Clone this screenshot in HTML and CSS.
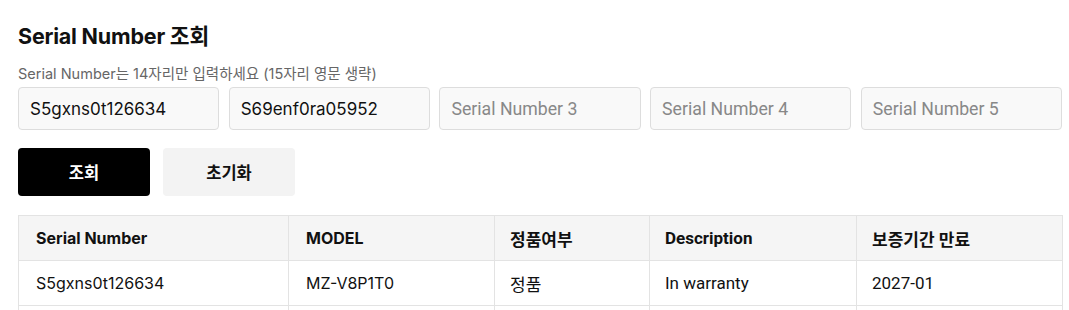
FILE: index.html
```html
<!DOCTYPE html>
<html lang="ko">
<head>
  <meta charset="UTF-8">
  <title>Serial Number 조회</title>
  <link rel="stylesheet" href="styles.css">
</head>
<body>
  <div class="page">
    <h1 class="title">Serial Number 조회</h1>
    <p class="hint">Serial Number는 14자리만 입력하세요 (15자리 영문 생략)</p>
    <div class="inputs">
      <input type="text" value="S5gxns0t126634" placeholder="Serial Number 1">
      <input type="text" value="S69enf0ra05952" placeholder="Serial Number 2">
      <input type="text" placeholder="Serial Number 3">
      <input type="text" placeholder="Serial Number 4">
      <input type="text" placeholder="Serial Number 5">
    </div>
    <div class="actions">
      <button class="btn btn-primary">조회</button>
      <button class="btn btn-secondary">초기화</button>
    </div>
    <table class="result">
      <thead>
        <tr>
          <th class="col-serial">Serial Number</th>
          <th class="col-model">MODEL</th>
          <th class="col-genuine alt">정품여부</th>
          <th class="col-desc alt">Description</th>
          <th class="col-date alt">보증기간 만료</th>
        </tr>
      </thead>
      <tbody>
        <tr>
          <td>S5gxns0t126634</td>
          <td>MZ-V8P1T0</td>
          <td class="alt">정품</td>
          <td class="alt">In warranty</td>
          <td class="alt">2027-01</td>
        </tr>
        <tr>
          <td>S69enf0ra05952</td>
          <td>MZ-V8P1T0</td>
          <td class="alt">정품</td>
          <td class="alt">In warranty</td>
          <td class="alt">2027-01</td>
        </tr>
      </tbody>
    </table>
  </div>
</body>
</html>
```

FILE: styles.css
```css
* {
  box-sizing: border-box;
}
body {
  margin: 0;
  background: #fff;
  color: #111;
  font-family: Inter, "Noto Sans CJK KR", sans-serif;
}
.page {
  padding: 20px 7px 0 18px;
}
.title {
  margin: 0;
  font-size: 21.5px;
  font-weight: 700;
  line-height: 32px;
  letter-spacing: -0.2px;
}
.hint {
  margin: 14px 0 5px;
  font-size: 14.5px;
  line-height: 16px;
  color: #666;
}
.inputs {
  display: grid;
  grid-template-columns: repeat(5, 1fr);
  gap: 9.5px;
}
.inputs input {
  height: 43px;
  padding: 0 11px;
  border: 1px solid #ddd;
  border-radius: 4px;
  background: #f9f9f9;
  font-family: Inter, "Noto Sans CJK KR", sans-serif;
  font-size: 17px;
  color: #111;
  outline: none;
  min-width: 0;
}
.inputs input::placeholder {
  font-family: Roboto, sans-serif;
  color: #888;
  font-size: 17.7px;
}
.actions {
  display: flex;
  gap: 13px;
  margin-top: 18px;
}
.btn {
  width: 132px;
  height: 48px;
  border: none;
  border-radius: 4px;
  font-family: Inter, "Noto Sans CJK KR", sans-serif;
  font-size: 16.5px;
  font-weight: 700;
  cursor: pointer;
}
.btn-primary {
  background: #000;
  color: #fff;
}
.btn-secondary {
  background: #f3f3f3;
  color: #111;
}
.result {
  margin-top: 19px;
  width: 1044px;
  border-collapse: collapse;
  table-layout: fixed;
  font-size: 16px;
}
.result th,
.result td {
  height: 45px;
  padding: 0 17px;
  border: 1px solid #e3e3e3;
  text-align: left;
  vertical-align: middle;
}
.result th {
  background: #f5f5f5;
  font-weight: 700;
}
.result .alt {
  padding-left: 15px;
  font-family: Roboto, "Noto Sans CJK KR", sans-serif;
  font-size: 17px;
}
.col-serial { width: 270px; }
.col-model { width: 206px; }
.col-genuine { width: 155px; }
.col-desc { width: 207px; }
.col-date { width: 206px; }
```
